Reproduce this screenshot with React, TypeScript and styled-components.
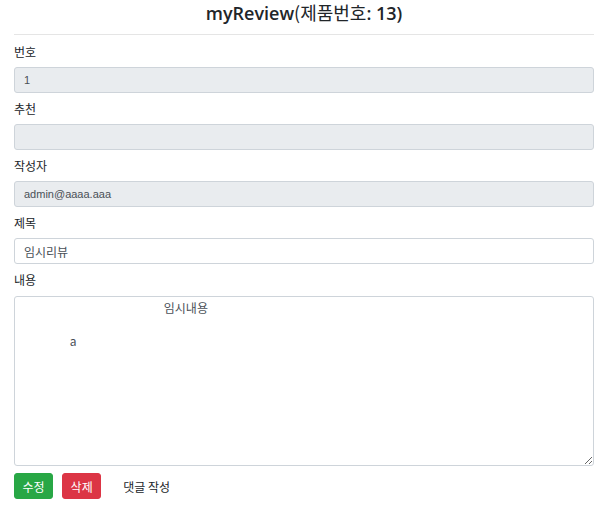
import React from "react";
import styled, { createGlobalStyle } from "styled-components";

const Global = createGlobalStyle`
  html, body { margin: 0; padding: 0; background: #fff; }
  body {
    font-family: "Noto Sans CJK KR", "Noto Sans", sans-serif;
    color: #212529;
  }
  * { box-sizing: border-box; }
`;

const Page = styled.div`
  padding: 0 10px 0 14px;
`;

const Title = styled.h3`
  margin: 0;
  height: 34px;
  font-size: 18px;
  line-height: 22px;
  padding-top: 1px;
  font-weight: 400;
  text-align: center;
  color: #212529;
`;

const Latin = styled.span`
  font-family: "Open Sans", sans-serif;
  font-weight: 600;
`;

const Rule = styled.hr`
  margin: 0 0 8px;
  border: 0;
  border-top: 1px solid #e5e5e5;
`;

const Group = styled.div`
  display: flex;
  flex-direction: column;
  margin-bottom: 7px;
`;

const Label = styled.label`
  font-size: 12px;
  line-height: 18px;
  margin-bottom: 6px;
  color: #212529;
`;

const Input = styled.input<{ $latin?: boolean }>`
  height: 26px;
  width: 100%;
  padding: 0 9px;
  font-family: ${(p) => (p.$latin ? '"Liberation Sans", "Noto Sans CJK KR", sans-serif' : "inherit")};
  font-size: ${(p) => (p.$latin ? "11px" : "12px")};
  color: #495057;
  background: ${(p) => (p.readOnly ? "#e9ecef" : "#fff")};
  border: 1px solid #ced4da;
  border-radius: 3px;
  outline: none;
`;

const Area = styled.textarea`
  height: 170px;
  width: 100%;
  padding: 3px 9px;
  font-family: inherit;
  font-size: 12px;
  line-height: 16.5px;
  color: #495057;
  background: #fff;
  border: 1px solid #ced4da;
  border-radius: 3px;
  outline: none;
  resize: vertical;
  margin-top: 1px;
`;

const Actions = styled.div`
  display: flex;
  align-items: center;
  gap: 9px;
  margin-top: 5px;
`;

const Button = styled.button<{ $tone: "green" | "red" | "plain" }>`
  height: 26px;
  padding: 0 ${(p) => (p.$tone === "plain" ? "12px" : "7.5px")};
  font-family: inherit;
  font-size: 12px;
  border: 1px solid
    ${(p) => (p.$tone === "green" ? "#28a745" : p.$tone === "red" ? "#dc3545" : "transparent")};
  border-radius: 3px;
  background: ${(p) => (p.$tone === "green" ? "#28a745" : p.$tone === "red" ? "#dc3545" : "transparent")};
  color: ${(p) => (p.$tone === "plain" ? "#212529" : "#fff")};
`;

const content =
  " ".repeat(52) + "임시내용\n\n" + " ".repeat(17) + "a";

export default function App() {
  return (
    <Page>
      <Global />
      <Title>
        <Latin>myReview</Latin>(제품번호<Latin>: 13)</Latin>
      </Title>
      <Rule />
      <Group>
        <Label>번호</Label>
        <Input readOnly $latin value="1" />
      </Group>
      <Group>
        <Label>추천</Label>
        <Input readOnly value="" />
      </Group>
      <Group>
        <Label>작성자</Label>
        <Input readOnly $latin value="admin@aaaa.aaa" />
      </Group>
      <Group>
        <Label>제목</Label>
        <Input defaultValue="임시리뷰" />
      </Group>
      <Group>
        <Label>내용</Label>
        <Area defaultValue={content} />
      </Group>
      <Actions>
        <Button $tone="green">수정</Button>
        <Button $tone="red">삭제</Button>
        <Button $tone="plain">댓글 작성</Button>
      </Actions>
    </Page>
  );
}
